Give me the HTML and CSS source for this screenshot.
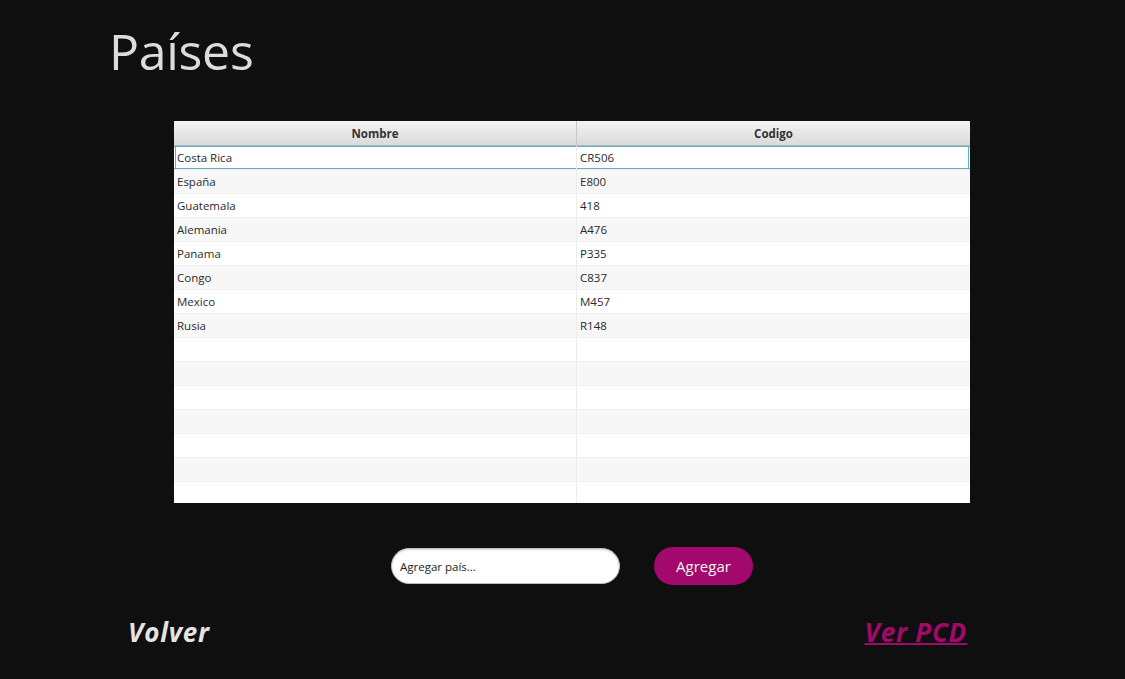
FILE: index.html
```html
<!DOCTYPE html>
<html lang="es">
<head>
<meta charset="utf-8">
<title>Países</title>
<link rel="stylesheet" href="styles.css">
</head>
<body>
<div class="page">
  <h1 class="title">Países</h1>
  <div class="table-wrap">
    <table class="grid">
      <thead>
        <tr><th>Nombre</th><th>Codigo</th></tr>
      </thead>
      <tbody>
        <tr class="selected"><td>Costa Rica</td><td>CR506</td></tr>
        <tr><td>España</td><td>E800</td></tr>
        <tr><td>Guatemala</td><td>418</td></tr>
        <tr><td>Alemania</td><td>A476</td></tr>
        <tr><td>Panama</td><td>P335</td></tr>
        <tr><td>Congo</td><td>C837</td></tr>
        <tr><td>Mexico</td><td>M457</td></tr>
        <tr><td>Rusia</td><td>R148</td></tr>
        <tr><td></td><td></td></tr>
        <tr><td></td><td></td></tr>
        <tr><td></td><td></td></tr>
        <tr><td></td><td></td></tr>
        <tr><td></td><td></td></tr>
        <tr><td></td><td></td></tr>
        <tr><td></td><td></td></tr>
      </tbody>
    </table>
  </div>
  <div class="add-row">
    <input class="add-input" type="text" placeholder="Agregar país...">
    <button class="add-btn">Agregar</button>
  </div>
  <div class="footer">
    <a class="back">Volver</a>
    <a class="pcd">Ver PCD</a>
  </div>
</div>
</body>
</html>
```

FILE: styles.css
```css
html, body {
  margin: 0;
  padding: 0;
  background: #0f0f0f;
  font-family: "Open Sans", "Noto Sans", sans-serif;
}
.page {
  width: 1125px;
  height: 679px;
  display: flex;
  flex-direction: column;
  overflow: hidden;
}
.title {
  margin: 18px 0 0 109px;
  font-size: 50px;
  font-weight: 400;
  color: #dcdcdc;
  line-height: 66px;
  height: 66px;
  letter-spacing: -0.3px;
}
.table-wrap {
  margin: 37px 0 0 174px;
  width: 796px;
  height: 382px;
  background: #ffffff;
  overflow: hidden;
}
.grid {
  width: 796px;
  border-collapse: separate;
  border-spacing: 0;
  table-layout: fixed;
  font-size: 11.5px;
  color: #2a2a2a;
}
.grid th {
  height: 25px;
  padding: 0;
  font-weight: 700;
  color: #333;
  background: linear-gradient(#f3f3f3, #dadada);
  border-right: 1px solid #c8c8c8;
  border-bottom: 1px solid #b8b8b8;
  box-sizing: border-box;
}
.grid th:first-child { width: 403px; }
.grid th:last-child { border-right: none; }
.grid td {
  height: 24px;
  padding: 0 3px;
  box-sizing: border-box;
  border-right: 1px solid #ececec;
  border-bottom: 1px solid #eeeeee;
  white-space: nowrap;
  background: #fff;
}
.grid td:last-child { border-right: none; }
.grid tbody tr:nth-child(even) td { background: #f7f7f7; }
.grid tbody tr.selected td {
  box-shadow: inset 0 1px 0 #5ab1c6, inset 0 -1px 0 #5ab1c6;
}
.grid tbody tr.selected td:first-child {
  box-shadow: inset 0 1px 0 #5ab1c6, inset 0 -1px 0 #5ab1c6, inset 1px 0 0 #fff, inset 2px 0 0 #5ab1c6;
}
.grid tbody tr.selected td:last-child {
  box-shadow: inset 0 1px 0 #5ab1c6, inset 0 -1px 0 #5ab1c6, inset -1px 0 0 #fff, inset -2px 0 0 #5ab1c6;
}
.add-row {
  margin-top: 44px;
  display: flex;
  align-items: center;
  padding-left: 391px;
  gap: 34px;
}
.add-input {
  width: 229px;
  height: 36px;
  box-sizing: border-box;
  border-radius: 18px;
  border: 1px solid #bdbdbd;
  background: #fff;
  padding: 0 8px;
  font-family: inherit;
  font-size: 11.5px;
  color: #222;
  box-shadow: inset 0 1px 2px rgba(0,0,0,0.15);
  outline: none;
}
.add-input::placeholder { color: #222; }
.add-btn {
  width: 99px;
  height: 38px;
  border-radius: 19px;
  border: none;
  background: #a3086d;
  color: #f4f4f4;
  font-family: inherit;
  font-size: 15px;
  padding: 0;
}
.footer {
  margin-top: 29px;
  display: flex;
  justify-content: space-between;
  padding: 0 158px 0 128px;
  font-size: 26px;
  font-weight: 700;
  font-style: italic;
  letter-spacing: 0.8px;
}
.back { color: #e4e4e4; }
.pcd { color: #a3086d; text-decoration: underline; text-decoration-thickness: 2px; }
```
